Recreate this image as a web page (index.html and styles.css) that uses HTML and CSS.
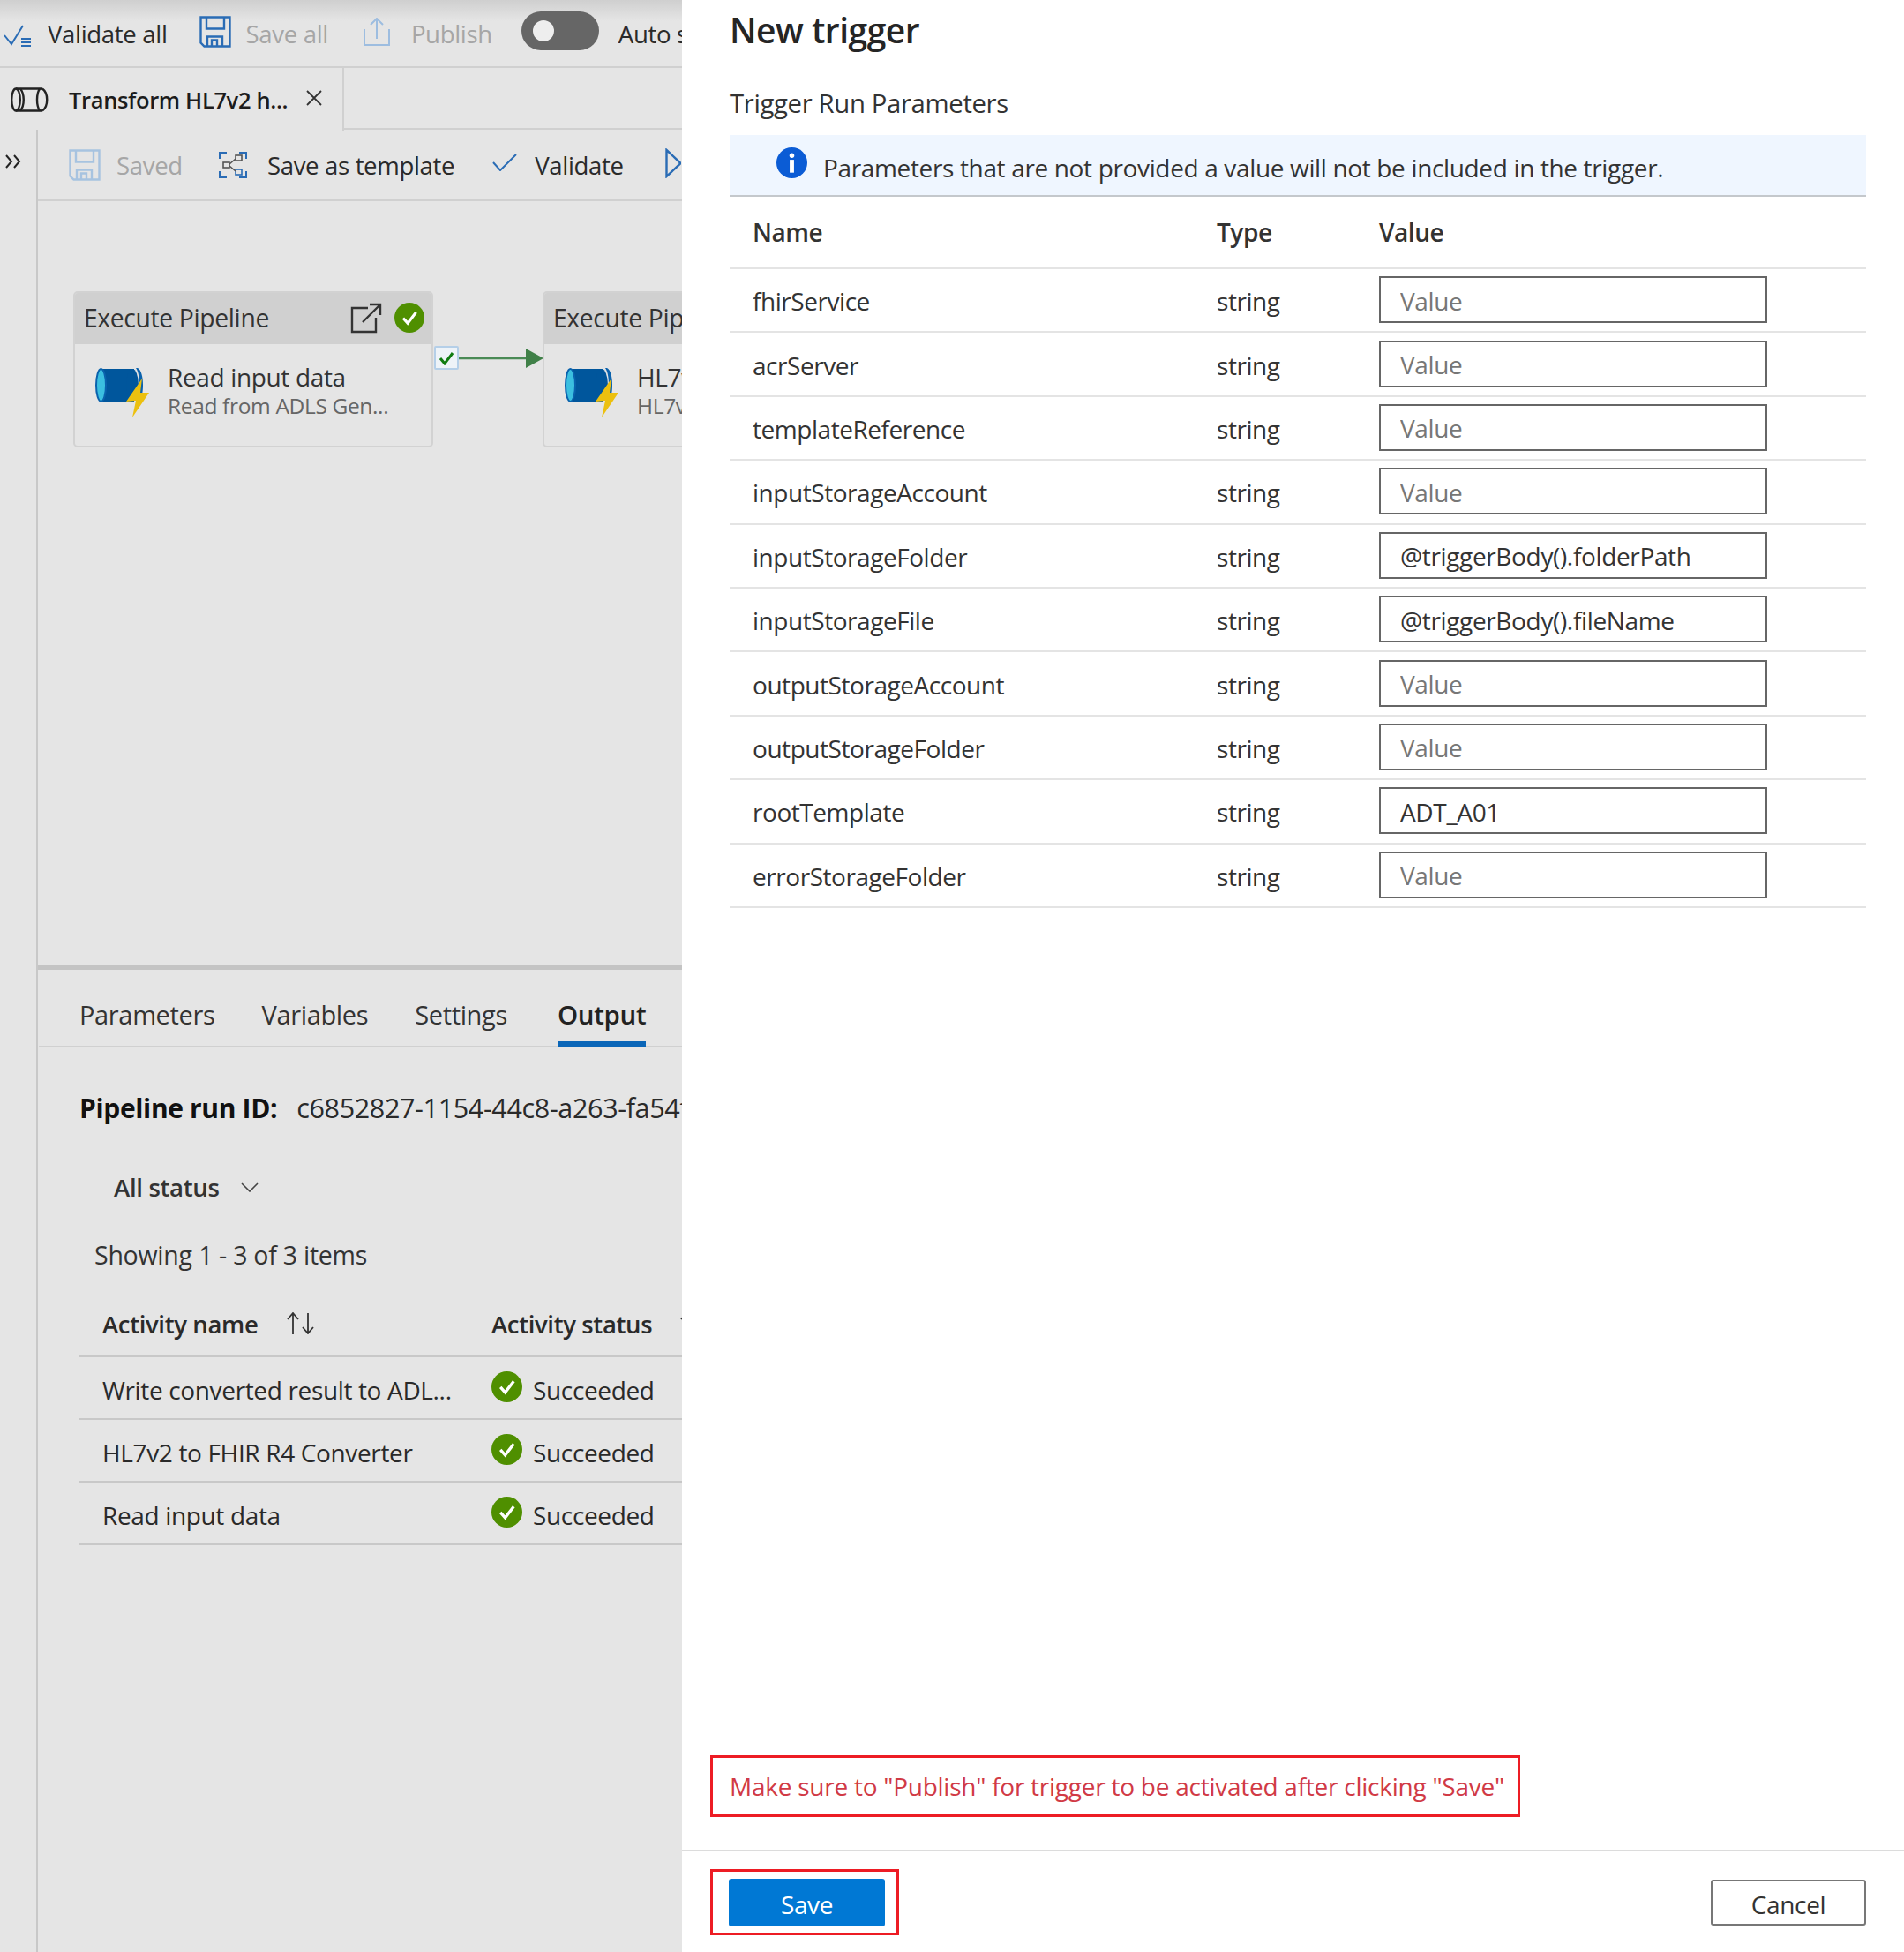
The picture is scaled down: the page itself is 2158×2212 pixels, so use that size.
FILE: index.html
```html
<!DOCTYPE html>
<html lang="en">
<head>
<meta charset="utf-8">
<title>New trigger</title>
<link rel="stylesheet" href="styles.css">
</head>
<body>
<svg class="defs" width="0" height="0" aria-hidden="true">
  <symbol id="ok" viewBox="0 0 36 36"><circle cx="18" cy="18" r="18" fill="#4f8f00"/><path d="M10.5 18.5l5.5 6 10-13" fill="none" stroke="#fff" stroke-width="3.4"/></symbol>
  <symbol id="disk" viewBox="0 0 36 36"><path d="M1.500 1.500h33v33h-29l-4-4z M8 1.500v13h20v-13 M9 34.500v-11h17v11 M14 34.500v-7h6v7" fill="none" stroke="currentColor" stroke-width="2.400"/></symbol>
  <symbol id="pipe" viewBox="0 0 62 62"><path d="M7 2h37v37h-37z" fill="#00569c"/><ellipse cx="42" cy="20.500" rx="7" ry="18.500" fill="#00569c"/><path d="M46 1h2c4 2 6 10 6 19.500s-2 17.500-6 19.500h-2c3-4 4-12 4-19.500s-1-15.500-4-19.500z" fill="#0b62ad"/><ellipse cx="6.500" cy="20.500" rx="5.500" ry="18.500" fill="#3bbfe0" stroke="#0a62ad" stroke-width="2"/><path d="M53 13l-18 26 11-1-4 19 19-28-10 0z" fill="#ecc00f"/></symbol>
</svg>
<div class="app">
  <section class="factory">
    <header class="topbar">
      <span class="cmd cmd-validate-all">
        <svg class="ico-va" viewBox="0 0 32 28"><path d="M1 13l8 10 13-21" fill="none" stroke="#2a6cb5" stroke-width="2"/><path d="M20 17h11M20 21h11M20 25h11" stroke="#2a6cb5" stroke-width="2"/></svg>
        <span>Validate all</span>
      </span>
      <span class="cmd cmd-save-all">
        <svg class="ico-disk ico-disk-strong"><use href="#disk"/></svg>
        <span class="muted">Save all</span>
      </span>
      <span class="cmd cmd-publish">
        <svg class="ico-publish" viewBox="0 0 30 32"><path d="M1 13v18h28v-18M15 24v-23M8 8l7-7 7 7" fill="none" stroke="#9dbde0" stroke-width="2"/></svg>
        <span class="muted">Publish</span>
      </span>
      <span class="toggle"><span class="knob"></span></span>
      <span class="auto">Auto save</span>
    </header>
    <div class="tabstrip">
      <div class="doc-tab">
        <svg class="ico-pipeline" viewBox="0 0 44 28"><path d="M6 1.500h30M6 26.500h30" stroke="#222" stroke-width="2.400"/><ellipse cx="6" cy="14" rx="4.800" ry="12.500" fill="none" stroke="#222" stroke-width="2.400"/><path d="M11 1.500c5 6 5 19 0 25M33 1.500c-4 6-4 19 0 25M36 1.500c7 5 7 20 0 25" fill="none" stroke="#222" stroke-width="2.400"/></svg>
        <span class="doc-title">Transform HL7v2 h...</span>
        <svg class="ico-x" viewBox="0 0 18 18"><path d="M1 1l16 16M17 1l-16 16" stroke="#333" stroke-width="1.800"/></svg>
      </div>
    </div>
    <div class="workspace">
      <aside class="rail">
        <svg class="ico-expand" viewBox="0 0 20 16"><path d="M2 1l6 7-6 7M11 1l6 7-6 7" fill="none" stroke="#222" stroke-width="2"/></svg>
      </aside>
      <main class="editor">
        <div class="toolbar">
          <span class="cmd cmd-saved">
            <svg class="ico-disk ico-disk-faint"><use href="#disk"/></svg>
            <span class="muted">Saved</span>
          </span>
          <span class="cmd cmd-template">
            <svg class="ico-template" viewBox="0 0 32 30"><path d="M1 8v-7h8M23 1h8v7M31 22v7h-8M9 29h-8v-7" fill="none" stroke="#2a6cb5" stroke-width="2"/><rect x="19" y="4" width="7" height="6" fill="none" stroke="#555" stroke-width="1.600"/><rect x="5" y="12" width="7" height="6" fill="none" stroke="#555" stroke-width="1.600"/><rect x="19" y="20" width="7" height="6" fill="none" stroke="#2a6cb5" stroke-width="1.600"/><path d="M12 14l7-6M12 16l7 6" stroke="#555" stroke-width="1.600"/></svg>
            <span>Save as template</span>
          </span>
          <span class="cmd cmd-validate">
            <svg class="ico-check" viewBox="0 0 28 20"><path d="M1 10l8 9 18-18" fill="none" stroke="#2a6cb5" stroke-width="2"/></svg>
            <span>Validate</span>
          </span>
          <svg class="ico-play" viewBox="0 0 18 34"><path d="M1.500 2l16 15-16 15z" fill="none" stroke="#2a6cb5" stroke-width="2.400"/></svg>
        </div>
        <div class="canvas">
          <article class="node node-read">
            <div class="node-head">
              <span>Execute Pipeline</span>
              <svg class="ico-open" viewBox="0 0 36 35"><path d="M20 6h-18v27h27v-16M14 22l20-20M22 2h12v12" fill="none" stroke="#333" stroke-width="2.400"/></svg>
              <svg class="ico-ok-head"><use href="#ok"/></svg>
            </div>
            <div class="node-body">
              <svg class="ico-pipe"><use href="#pipe"/></svg>
              <div>
                <div class="node-name">Read input data</div>
                <div class="node-sub">Read from ADLS Gen...</div>
              </div>
            </div>
          </article>
          <span class="port"><svg viewBox="0 0 18 16"><path d="M2 8l5 6 9-12" fill="none" stroke="#107c10" stroke-width="3"/></svg></span>
          <svg class="link" viewBox="0 0 96 22"><path d="M0 11h78" stroke="#4a8a55" stroke-width="2.500"/><path d="M76 0l20 11-20 11z" fill="#408048"/></svg>
          <article class="node node-convert">
            <div class="node-head"><span>Execute Pipeline</span></div>
            <div class="node-body">
              <svg class="ico-pipe"><use href="#pipe"/></svg>
              <div>
                <div class="node-name">HL7v2 to FHIR R4 Converter</div>
                <div class="node-sub">HL7v2 to FHIR R4 Converter</div>
              </div>
            </div>
          </article>
        </div>
        <div class="panel">
          <nav class="panel-tabs">
            <span class="panel-tab">Parameters</span>
            <span class="panel-tab">Variables</span>
            <span class="panel-tab">Settings</span>
            <span class="panel-tab panel-tab-active">Output</span>
          </nav>
          <div class="run-id"><b>Pipeline run ID:</b><span>c6852827-1154-44c8-a263-fa54fd5c9e1a</span></div>
          <div class="filter">All status
            <svg class="ico-chevron" viewBox="0 0 20 11"><path d="M1 1l9 9 9-9" fill="none" stroke="#444" stroke-width="1.600"/></svg>
          </div>
          <div class="showing">Showing 1 - 3 of 3 items</div>
          <div class="grid">
            <div class="grid-row grid-head">
              <span class="col-name">Activity name
                <svg class="ico-sort" viewBox="0 0 32 25"><path d="M7 25v-23M1 8l6-7 6 7M24 1v22M18 17l6 7 6-7" fill="none" stroke="#333" stroke-width="1.800"/></svg>
              </span>
              <span class="col-status">Activity status
                <svg class="ico-sort ico-sort-next" viewBox="0 0 32 25"><path d="M7 25v-23M1 8l6-7 6 7M24 1v22M18 17l6 7 6-7" fill="none" stroke="#333" stroke-width="1.800"/></svg>
              </span>
            </div>
            <div class="grid-row">
              <span class="col-name">Write converted result to ADL...</span>
              <span class="col-status"><svg class="ico-ok"><use href="#ok"/></svg>Succeeded</span>
            </div>
            <div class="grid-row">
              <span class="col-name">HL7v2 to FHIR R4 Converter</span>
              <span class="col-status"><svg class="ico-ok"><use href="#ok"/></svg>Succeeded</span>
            </div>
            <div class="grid-row">
              <span class="col-name">Read input data</span>
              <span class="col-status"><svg class="ico-ok"><use href="#ok"/></svg>Succeeded</span>
            </div>
          </div>
        </div>
      </main>
    </div>
  </section>

  <section class="blade">
    <h1 class="blade-title">New trigger</h1>
    <h2 class="blade-sub">Trigger Run Parameters</h2>
    <div class="info">
      <svg class="ico-info" viewBox="0 0 36 36"><circle cx="18" cy="18" r="18" fill="#0b5cd5"/><circle cx="18" cy="9.500" r="2.800" fill="#fff"/><rect x="15.500" y="14.500" width="5" height="15" fill="#fff"/></svg>
      <span>Parameters that are not provided a value will not be included in the trigger.</span>
    </div>
    <div class="params">
      <div class="param param-head"><span>Name</span><span>Type</span><span>Value</span></div>
      <div class="param"><span>fhirService</span><span>string</span><input class="field" placeholder="Value"></div>
      <div class="param"><span>acrServer</span><span>string</span><input class="field" placeholder="Value"></div>
      <div class="param"><span>templateReference</span><span>string</span><input class="field" placeholder="Value"></div>
      <div class="param"><span>inputStorageAccount</span><span>string</span><input class="field" placeholder="Value"></div>
      <div class="param"><span>inputStorageFolder</span><span>string</span><input class="field" value="@triggerBody().folderPath"></div>
      <div class="param"><span>inputStorageFile</span><span>string</span><input class="field" value="@triggerBody().fileName"></div>
      <div class="param"><span>outputStorageAccount</span><span>string</span><input class="field" placeholder="Value"></div>
      <div class="param"><span>outputStorageFolder</span><span>string</span><input class="field" placeholder="Value"></div>
      <div class="param"><span>rootTemplate</span><span>string</span><input class="field" value="ADT_A01"></div>
      <div class="param"><span>errorStorageFolder</span><span>string</span><input class="field" placeholder="Value"></div>
    </div>
    <div class="notice">Make sure to "Publish" for trigger to be activated after clicking "Save"</div>
    <footer class="blade-foot">
      <span class="callout"><button class="btn btn-primary">Save</button></span>
      <button class="btn btn-cancel">Cancel</button>
    </footer>
  </section>
</div>
</body>
</html>
```
FILE: styles.css
```css
* { box-sizing: border-box; }
html, body { margin: 0; padding: 0; }
body {
  width: 2158px;
  height: 2212px;
  overflow: hidden;
  font-family: "Open Sans", "Liberation Sans", sans-serif;
  font-size: 28px;
  letter-spacing: -0.35px;
  color: #2a2a2a;
  background: #fff;
}
.defs { position: absolute; }
svg { display: block; flex: none; }
.app { display: flex; height: 2212px; }

/* left: dimmed factory */
.factory {
  width: 773px;
  flex: none;
  height: 100%;
  overflow: hidden;
  background: #e5e5e5;
  display: flex;
  flex-direction: column;
  white-space: nowrap;
}
.topbar {
  height: 77px;
  flex: none;
  display: flex;
  align-items: center;
  padding-left: 4px;
  font-size: 27.600px;
  border-bottom: 2px solid #d0d0d0;
  background: linear-gradient(#cfcfcf 0, #e5e5e5 24px);
}
.cmd { display: inline-flex; align-items: center; flex: none; }
.muted { color: #a6a6a6; }
.ico-va { width: 32px; height: 28px; margin-top: 6px; margin-right: 18px; }
.cmd-save-all { margin-left: 36px; }
.ico-disk { width: 36px; height: 36px; margin-right: 17px; }
.ico-disk-strong { color: #2a6cb5; margin-top: -4px; }
.ico-disk-faint { color: #a7c3e0; }
.cmd-publish { margin-left: 40px; }
.ico-publish { width: 30px; height: 32px; margin-right: 24px; margin-top: -4px; }
.toggle {
  width: 88px;
  height: 44px;
  margin-left: 33px;
  margin-top: -6px;
  border-radius: 22px;
  background: #666;
  display: flex;
  align-items: center;
  padding-left: 13px;
  flex: none;
}
.knob { width: 24px; height: 24px; border-radius: 50%; background: #eee; }
.auto { margin-left: 22px; flex: none; }

.tabstrip { height: 70px; flex: none; border-bottom: 2px solid #d0d0d0; }
.doc-tab {
  width: 390px;
  height: 71px;
  display: flex;
  align-items: center;
  padding-left: 12px;
  border-right: 2px solid #d0d0d0;
  background: #e5e5e5;
  font-weight: 600;
  font-size: 25.500px;
  color: #1c1c1c;
}
.ico-pipeline { width: 44px; height: 28px; margin-right: 22px; }
.ico-x { width: 18px; height: 18px; margin-left: 21px; margin-top: -4px; }

.workspace { flex: 1; display: flex; min-height: 0; }
.rail { width: 43px; flex: none; border-right: 2px solid #c8c8c8; padding: 28px 0 0 5px; }
.ico-expand { width: 20px; height: 16px; }
.editor { flex: 1; min-width: 0; display: flex; flex-direction: column; }
.toolbar {
  height: 81px;
  flex: none;
  display: flex;
  align-items: center;
  padding-left: 35px;
  font-size: 27.600px;
  border-bottom: 2px solid #d0d0d0;
}
.ico-disk-faint { margin-right: 18px; }
.cmd-template { margin-left: 41px; }
.ico-template { width: 32px; height: 30px; margin-right: 23px; }
.cmd-validate { margin-left: 43px; }
.ico-check { width: 28px; height: 20px; margin-right: 20px; margin-top: -6px; }
.ico-play { width: 18px; height: 34px; margin-left: 47px; margin-top: -4px; }

.canvas { height: 866px; flex: none; position: relative; overflow: hidden; }
.node {
  position: absolute;
  top: 102px;
  width: 408px;
  height: 177px;
  border: 2px solid #d2d2d2;
  border-radius: 5px;
  overflow: hidden;
}
.node-read { left: 40px; }
.node-convert { left: 572px; }
.node-head {
  height: 58px;
  background: #d0d0d0;
  display: flex;
  align-items: center;
  padding: 0 0 2px 10px;
  font-size: 28.300px;
  color: #333;
}
.ico-open { width: 36px; height: 35px; margin-left: auto; }
.ico-ok-head { width: 34px; height: 34px; margin: 0 8px 0 14px; }
.node-body { display: flex; padding: 18px 0 0 23px; color: #333; }
.ico-pipe { width: 62px; height: 62px; margin-right: 20px; margin-top: 8px; }
.node-name { line-height: 38px; }
.node-sub { font-size: 24.500px; line-height: 28px; color: #666; }
.port {
  position: absolute;
  left: 449px;
  top: 164px;
  width: 28px;
  height: 27px;
  background: #eef3f8;
  border: 2px solid #b5cfe8;
  border-radius: 2px;
  display: flex;
  align-items: center;
  justify-content: center;
}
.port svg { width: 18px; height: 16px; }
.link { position: absolute; left: 477px; top: 167px; width: 96px; height: 22px; }

.panel { flex: 1; border-top: 5px solid #c4c4c4; position: relative; min-height: 0; }
.panel-tabs {
  height: 88px;
  display: flex;
  align-items: center;
  gap: 53px;
  padding: 15px 0 0 46px;
  margin-left: 1px;
  border-bottom: 2px solid #d0d0d0;
}
.panel-tab { position: relative; color: #333; font-size: 29px; line-height: 71px; }
.panel-tab-active { font-weight: 600; font-size: 29.500px; color: #222; margin-left: 4px; }
.panel-tab-active::after {
  content: "";
  position: absolute;
  left: 0;
  right: 0;
  bottom: -1px;
  height: 6px;
  background: #0a66b8;
}
.run-id {
  display: flex;
  gap: 22px;
  align-items: center;
  height: 40px;
  margin: 48px 0 0 47px;
  font-size: 30.500px;
}
.run-id b { font-weight: 700; font-size: 30px; color: #111; }
.filter {
  display: flex;
  align-items: center;
  height: 36px;
  margin: 52px 0 0 86px;
  font-weight: 600;
  font-size: 27.600px;
  color: #333;
}
.ico-chevron { width: 20px; height: 11px; margin-left: 24px; }
.showing {
  height: 38px;
  line-height: 38px;
  margin: 40px 0 0 64px;
  font-size: 28.500px;
  letter-spacing: -0.25px;
  color: #333;
}
.grid { margin: 30px 0 0 46px; }
.grid-row {
  height: 71px;
  display: flex;
  align-items: center;
  padding-top: 4px;
  border-bottom: 2px solid #c8c8c8;
}
.grid-head { height: 67px; padding: 0 0 6px; font-weight: 600; font-size: 27.500px; }
.col-name { width: 468px; padding-left: 27px; display: flex; align-items: center; flex: none; }
.col-status { display: flex; align-items: center; flex: none; }
.ico-sort { width: 32px; height: 25px; margin: -2px 0 0 33px; }
.ico-sort-next { margin-left: 32px; }
.ico-ok { width: 35px; height: 35px; margin: -6px 12px 0 0; }

/* right: blade */
.blade {
  flex: 1;
  min-width: 0;
  height: 100%;
  display: flex;
  flex-direction: column;
  padding: 0 43px 0 54px;
  background: #fff;
}
.blade-title {
  margin: 5px 0 0;
  height: 58px;
  line-height: 58px;
  font-size: 39px;
  font-weight: 600;
  letter-spacing: -0.5px;
  color: #252525;
}
.blade-sub {
  margin: 34px 0 0;
  height: 40px;
  line-height: 40px;
  font-size: 29.300px;
  font-weight: 400;
  color: #333;
}
.info {
  margin-top: 16px;
  height: 70px;
  flex: none;
  display: flex;
  align-items: center;
  gap: 18px;
  padding: 6px 0 0 53px;
  background: #eff6ff;
  border-bottom: 2px solid #c4c8cc;
  color: #333;
}
.ico-info { width: 35px; height: 35px; margin-top: -12px; }
.params { flex: 1; min-height: 0; letter-spacing: -0.45px; }
.param {
  display: grid;
  grid-template-columns: 526px 184px 440px;
  align-items: center;
  height: 72.400px;
  padding: 2px 0 0 26px;
  border-bottom: 2px solid #e4e4e4;
  color: #333;
}
.param-head { height: 82px; font-weight: 600; padding-top: 0; }
.field {
  display: block;
  width: 440px;
  height: 53px;
  margin-top: -3px;
  padding: 2px 22px 0;
  border: 2px solid #666;
  border-radius: 0;
  background: #fff;
  font: inherit;
  letter-spacing: -0.35px;
  color: #333;
  outline: none;
}
.field::placeholder { color: #777; opacity: 1; }
.notice {
  width: 918px;
  height: 70px;
  flex: none;
  margin-left: -22px;
  margin-bottom: 37px;
  padding-left: 19px;
  border: 3px solid #ed1c24;
  display: flex;
  align-items: center;
  letter-spacing: -0.25px;
  color: #d13a45;
  white-space: nowrap;
}
.blade-foot {
  height: 116px;
  flex: none;
  margin: 0 -43px 0 -54px;
  padding: 20px 43px 0 32px;
  border-top: 2px solid #dcdcdc;
  display: flex;
  justify-content: space-between;
  align-items: flex-start;
}
.callout {
  width: 214px;
  height: 75px;
  border: 3px solid #ed1c24;
  padding: 8px 0 0 18px;
  display: block;
}
.btn {
  font: inherit;
  letter-spacing: inherit;
  display: block;
  padding: 3px 0 0;
  border-radius: 3px;
  cursor: pointer;
}
.btn-primary { width: 177px; height: 54px; background: #0078d4; border: 0; color: #fff; }
.btn-cancel { width: 176px; height: 52px; margin-top: 12px; background: #fff; border: 2px solid #777; color: #333; }
```
